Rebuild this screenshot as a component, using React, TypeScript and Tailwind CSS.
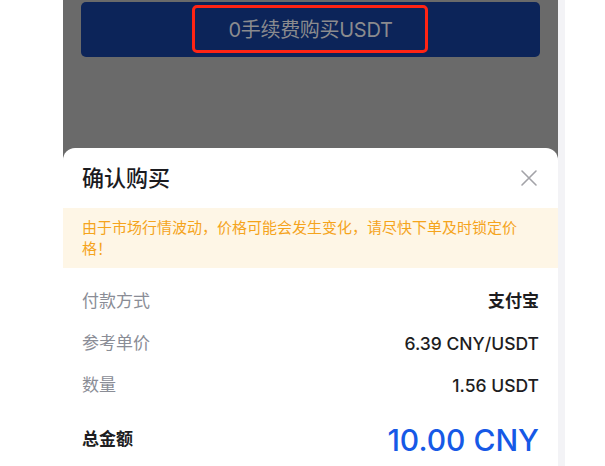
import React from "react";

const font = { fontFamily: '"Inter", "Noto Sans CJK SC", sans-serif' };

export default function App() {
  return (
    <div
      className="w-[605px] h-[466px] bg-white overflow-hidden flex"
      style={font}
    >
      <div className="w-[63px] shrink-0 bg-white" />
      <div className="w-[495px] shrink-0 bg-[#6a6a6a] flex flex-col">
        <div className="relative shrink-0 mx-[18px] mt-[2px] h-[55px] rounded-[5px] bg-[#0c2459] flex items-center justify-center">
          <span className="text-[20px] text-[#8b8b8e] tracking-[-0.3px]">0手续费购买USDT</span>
          <div className="absolute left-[111px] top-[3px] w-[236px] h-[48px] border-[3px] border-[#ff2414] rounded-[5px]" />
        </div>
        <div className="mt-[91px] shrink-0 bg-white rounded-t-[12px] flex flex-col">
          <div className="h-[60px] shrink-0 px-[19px] flex items-center justify-between">
            <span className="text-[22px] font-medium text-[#1b1b1f]">确认购买</span>
            <svg width="18" height="18" viewBox="0 0 18 18" className="mr-[1px]">
              <path d="M2 2 L16 16 M16 2 L2 16" stroke="#a3a3a8" strokeWidth="1.6" strokeLinecap="round" />
            </svg>
          </div>
          <div className="bg-[#fef6e6] shrink-0 pl-[19px] pr-[30px] py-[9px]">
            <p className="text-[15px] leading-[21px] text-[#f5a41c]">
              由于市场行情波动，价格可能会发生变化，请尽快下单及时锁定价格！
            </p>
          </div>
          <div className="px-[19px] pt-[13px] flex flex-col">
            <div className="h-[42px] shrink-0 flex items-center justify-between">
              <span className="text-[17px] text-[#8a8d96]">付款方式</span>
              <span className="text-[17px] font-semibold text-[#1d1d21]">支付宝</span>
            </div>
            <div className="h-[42px] shrink-0 flex items-center justify-between">
              <span className="text-[17px] text-[#8a8d96]">参考单价</span>
              <span className="text-[17.5px] font-medium text-[#1d1d21]">6.39 CNY/USDT</span>
            </div>
            <div className="h-[42px] shrink-0 flex items-center justify-between">
              <span className="text-[17px] text-[#8a8d96]">数量</span>
              <span className="text-[17.5px] font-medium text-[#1d1d21]">1.56 USDT</span>
            </div>
            <div className="h-[66px] shrink-0 flex items-center justify-between">
              <span className="text-[17px] font-semibold text-[#1d1d21]">总金额</span>
              <span className="text-[30px] font-medium text-[#1659e6]">10.00 CNY</span>
            </div>
          </div>
        </div>
      </div>
      <div className="w-[7px] shrink-0 bg-[#f3f3f6]" />
      <div className="flex-1 bg-white" />
    </div>
  );
}
